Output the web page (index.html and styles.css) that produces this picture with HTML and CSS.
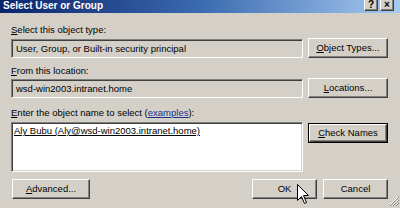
FILE: index.html
```html
<!DOCTYPE html>
<html>
<head>
<meta charset="utf-8">
<link rel="stylesheet" href="styles.css">
</head>
<body>
<div class="window">
  <div class="titlebar">
    <span class="title">Select User or Group</span>
    <div class="tbtns">
      <span class="tbtn">?</span>
      <span class="tbtn">×</span>
    </div>
  </div>
  <div class="content">
    <div class="label l1"><u>S</u>elect this object type:</div>
    <div class="row">
      <div class="field">User, Group, or Built-in security principal</div>
      <div class="btn"><u>O</u>bject Types...</div>
    </div>
    <div class="label l2"><u>F</u>rom this location:</div>
    <div class="row">
      <div class="field">wsd-win2003.intranet.home</div>
      <div class="btn"><u>L</u>ocations...</div>
    </div>
    <div class="label l3"><u>E</u>nter the object name to select (<a class="link">examples</a>):</div>
    <div class="row top">
      <div class="field area"><u>Aly Bubu (Aly@wsd-win2003.intranet.home)</u></div>
      <div class="defwrap"><div class="btn def"><u>C</u>heck Names</div></div>
    </div>
    <div class="bottom">
      <div class="btn adv"><u>A</u>dvanced...</div>
      <div class="okcancel">
        <div class="btn ok">OK</div>
        <div class="btn">Cancel</div>
      </div>
    </div>
  </div>
  <svg class="grip" width="10" height="10" viewBox="0 0 10 10">
    <path d="M9 1 L1 9 M9 4 L4 9 M9 7 L7 9" stroke="#fff" stroke-width="1"/>
    <path d="M10 1 L1 10 M10 4 L4 10 M10 7 L7 10" stroke="#808080" stroke-width="1"/>
  </svg>
  <svg class="cursor" width="13" height="21" viewBox="0 0 13 21">
    <path d="M0.5 0.5 L0.5 16.5 L4.5 12.5 L7.5 19.5 L9.5 18.5 L6.5 11.5 L11.5 11.5 Z" fill="#fff" stroke="#000" stroke-width="1"/>
  </svg>
</div>
</body>
</html>
```

FILE: styles.css
```css
* { box-sizing: border-box; }
html, body { margin: 0; padding: 0; }
body { background: #d4d0c8; }
.window {
  position: relative;
  width: 400px;
  height: 208px;
  background: #d4d0c8;
  overflow: hidden;
  font-family: "Liberation Sans", Arial, sans-serif;
  font-size: 9.5px;
  color: #000;
}
.titlebar {
  height: 13px;
  background: linear-gradient(to right, #0a246a 0%, #3a6ab0 50%, #a6caf0 100%);
  display: flex;
  justify-content: space-between;
  align-items: flex-start;
  padding-left: 3px;
  padding-right: 6px;
}
.title {
  color: #fff;
  font-weight: bold;
  font-size: 10px;
  line-height: 12px;
}
.tbtns { display: flex; gap: 2px; }
.tbtn {
  width: 14px;
  height: 11px;
  display: flex;
  align-items: center;
  justify-content: center;
  background: #d4d0c8;
  border-right: 1px solid #404040;
  border-bottom: 1px solid #404040;
  border-left: 1px solid #fff;
  box-shadow: inset -1px -1px #808080;
  font-weight: bold;
  font-size: 10px;
  line-height: 10px;
  color: #000;
}
.content {
  display: flex;
  flex-direction: column;
  padding-left: 11px;
  padding-right: 12px;
}
.label { height: 12px; line-height: 12px; }
.l1 { margin-top: 11px; margin-bottom: 2px; }
.l2 { margin-top: 7px; margin-bottom: 1px; }
.l3 { margin-top: 9px; margin-bottom: 3px; }
.link { color: #1c2f8c; text-decoration: underline; }
.row {
  display: flex;
  justify-content: space-between;
  align-items: center;
}
.row.top { align-items: flex-start; }
.field {
  width: 292px;
  height: 19px;
  line-height: 17px;
  padding-left: 4px;
  border: 1px solid;
  border-color: #808080 #fff #fff #808080;
  box-shadow: inset 1px 1px #404040, inset -1px -1px #d4d0c8;
  background: #d4d0c8;
  white-space: nowrap;
}
.field.area {
  height: 50px;
  background: #fff;
  padding-left: 2px;
  line-height: 15px;
}
.btn {
  width: 80px;
  height: 20px;
  line-height: 18px;
  text-align: center;
  border: 1px solid;
  border-color: #fff #404040 #404040 #fff;
  box-shadow: inset -1px -1px #808080;
  background: #d4d0c8;
  white-space: nowrap;
}
.defwrap {
  border: 1px solid #000;
  margin-top: 1px;
}
.btn.def { width: 78px; height: 18px; line-height: 16px; }
.bottom {
  margin-top: 7px;
  display: flex;
  justify-content: space-between;
}
.btn.adv { width: 78px; margin-left: 1px; }
.okcancel { display: flex; gap: 6px; }
.btn.ok { width: 65px; }
.okcancel .btn:last-child { width: 65px; }
.grip { position: absolute; right: 1px; bottom: 2px; }
.cursor { position: absolute; left: 297px; top: 184px; }
```
